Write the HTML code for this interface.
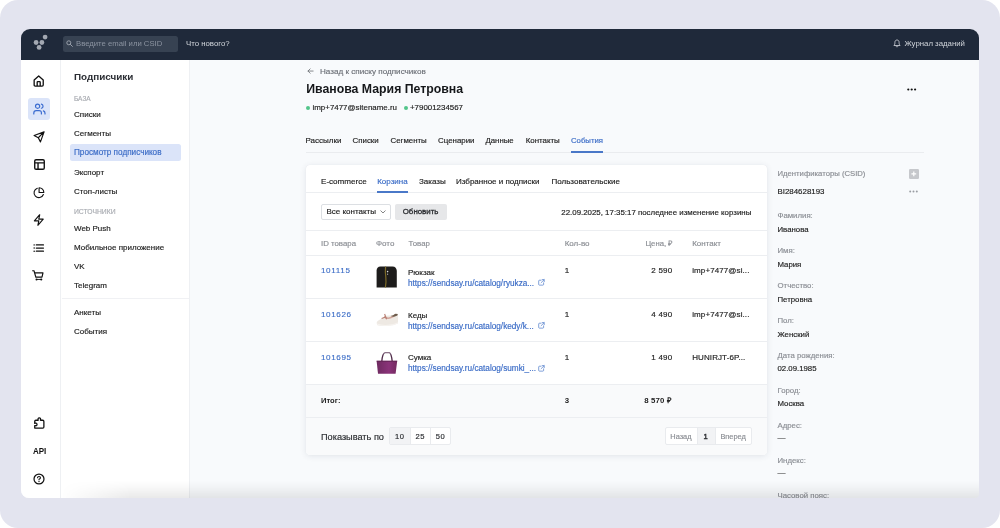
<!DOCTYPE html>
<html lang="ru">
<head>
<meta charset="utf-8">
<title>Иванова Мария Петровна</title>
<style>
*{box-sizing:border-box;margin:0;padding:0}
html,body{width:1000px;height:528px;overflow:hidden;background:#fff}
body{font-family:"Liberation Sans",sans-serif;font-size:8px;color:#222;position:relative}
.bg{position:absolute;left:0;top:0;width:1000px;height:528px;border-radius:18px;background:#e3e4ef}
.win{position:absolute;left:21px;top:29px;width:958px;height:469px;border-radius:9px 9px 4px 8px;overflow:hidden;background:#f8fafc}
.abs{position:absolute}
.layer{position:absolute;left:0;top:0;width:958px;height:469px;will-change:transform}
.t{position:absolute;white-space:nowrap;line-height:10px;font-size:8px;-webkit-text-stroke:.16px currentColor}
.hdr{position:absolute;left:0;top:0;width:958px;height:30.5px;background:#1f293a}
.rail{position:absolute;left:0;top:30.5px;width:40px;height:440px;background:#fff;border-right:1px solid #eef0f3}
.side{position:absolute;left:40px;top:30.5px;width:128.5px;height:440px;background:#fff;border-right:1px solid #eef0f3}
.g{color:#8a8d93}
.b{color:#3b6cc6}
.mono{font-family:"Liberation Mono",monospace}
.num{text-align:center;font-size:7.6px;letter-spacing:.5px;text-indent:.5px;color:#2a2c30}
.id{font-size:8.1px;letter-spacing:.62px;-webkit-text-stroke:.12px currentColor}
.card .t{margin-top:.6px}
svg{position:absolute;overflow:visible}
.ic{fill:none;stroke:#111;stroke-width:1.25;stroke-linecap:round;stroke-linejoin:round}
.card{position:absolute;left:285px;top:136px;width:460.5px;height:290px;background:#fff;border-radius:4px;box-shadow:0 1px 6px rgba(30,40,70,.10),0 0 1px rgba(30,40,70,.10)}
.hl{position:absolute;height:1px;background:#eceef1}
.fade{position:absolute;left:40px;bottom:0;width:918px;height:18px;background:linear-gradient(to bottom,rgba(0,0,0,0) 0%,rgba(0,0,0,.03) 45%,rgba(0,0,0,.085) 100%);-webkit-mask-image:linear-gradient(to right,transparent 0,#000 70px);mask-image:linear-gradient(to right,transparent 0,#000 70px)}
</style>
</head>
<body>
<div class="bg"></div>
<div class="win"><div class="layer">
  <!-- HEADER -->
  <div class="hdr"></div>
  <svg class="abs" style="left:12px;top:5px" width="16" height="18" viewBox="0 0 16 18">
    <circle cx="12.1" cy="3.1" r="2.4" fill="#a3a8b2"/>
    <circle cx="3.1" cy="8.5" r="2.4" fill="#a3a8b2"/>
    <circle cx="8.9" cy="8.5" r="2.4" fill="#a3a8b2"/>
    <circle cx="6.1" cy="13.4" r="2.4" fill="#a3a8b2"/>
  </svg>
  <div class="abs" style="left:42px;top:7px;width:115px;height:15.5px;border-radius:2.5px;background:#39444f;background:#374252"></div>
  <svg class="abs" style="left:45px;top:11px" width="7" height="7" viewBox="0 0 7 7"><circle cx="2.8" cy="2.8" r="2" fill="none" stroke="#9aa1ac" stroke-width="1"/><path d="M4.4 4.4 L6.4 6.4" stroke="#9aa1ac" stroke-width="1" stroke-linecap="round"/></svg>
  <div class="t" style="left:55px;top:9.5px;color:#8b93a0;font-size:7.72px;-webkit-text-stroke:0">Введите email или CSID</div>
  <div class="t" style="left:165px;top:9.5px;color:#d3d7dd;font-size:7.8px;-webkit-text-stroke:0">Что нового?</div>
  <svg class="abs" style="left:872px;top:10px" width="8" height="9" viewBox="0 0 8 9"><path d="M1.2 6.2 C1.9 5.4 1.9 4.6 1.9 3.4 C1.9 1.9 2.8 1 4 1 C5.2 1 6.1 1.9 6.1 3.4 C6.1 4.6 6.1 5.4 6.8 6.2 Z M3.2 7.6 C3.5 8.1 4.5 8.1 4.8 7.6" fill="none" stroke="#c6cad1" stroke-width=".9" stroke-linejoin="round" stroke-linecap="round"/></svg>
  <div class="t" style="left:883.5px;top:9.5px;color:#d0d4da;font-size:7.8px;-webkit-text-stroke:0">Журнал заданий</div>

  <!-- RAIL -->
  <div class="rail"></div>
  <div class="abs" style="left:7px;top:69px;width:21.5px;height:21.5px;border-radius:3px;background:#dbe4f9"></div>
  <!-- home -->
  <svg style="left:12.4px;top:45.6px" width="11.4" height="12.3" viewBox="0 0 12 13"><path class="ic" d="M1.2 5.2 L6 1 L10.8 5.2 V10.6 Q10.8 11.8 9.6 11.8 H2.4 Q1.2 11.8 1.2 10.6 Z M4.4 11.8 V7.6 Q4.4 7 5 7 H7 Q7.6 7 7.6 7.6 V11.8" style="stroke-width:1.4"/></svg>
  <!-- users -->
  <svg style="left:12px;top:74px" width="13" height="12" viewBox="0 0 13 12"><g class="ic" style="stroke:#3b6cd0;stroke-width:1.2"><circle cx="4.6" cy="3.2" r="2.1"/><path d="M0.8 11 V10 Q0.8 7.6 3.2 7.6 H6 Q8.4 7.6 8.4 10 V11"/><path d="M8.4 1.15 A2.1 2.1 0 0 1 8.4 5.25"/><path d="M10.4 7.9 A2.4 2.4 0 0 1 12 10.2 V11"/></g></svg>
  <!-- send -->
  <svg style="left:12px;top:102px" width="12.2" height="11.8" viewBox="0 0 13 13"><path class="ic" d="M12 1 L1 5 L5.6 7.4 L8 12 Z M12 1 L5.6 7.4" style="stroke-width:1.3"/></svg>
  <!-- layout -->
  <svg style="left:12.5px;top:130px" width="11" height="11" viewBox="0 0 12 12"><path class="ic" d="M2.2 0.8 H9.8 Q11.2 .8 11.2 2.2 V9.8 Q11.2 11.2 9.8 11.2 H2.2 Q.8 11.2 .8 9.8 V2.2 Q.8 .8 2.2 .8 Z M.8 4.2 H11.2 M4.4 4.2 V11.2" style="stroke-width:1.5"/></svg>
  <!-- pie -->
  <svg style="left:12px;top:157.6px" width="12" height="11.6" viewBox="0 0 13 13"><path class="ic" d="M11.4 8.4 A5.4 5.4 0 1 1 4.6 1.4 M6.6 .9 A5.2 5.2 0 0 1 11.9 6.2 H6.6 Z" style="stroke-width:1.25"/></svg>
  <!-- bolt -->
  <svg style="left:12.4px;top:185.3px" width="11.6" height="12" viewBox="0 0 12 13"><path class="ic" d="M7 .8 L1.2 7.4 H6 L5 12.2 L10.8 5.6 H6 Z" style="stroke-width:1.25"/></svg>
  <!-- list -->
  <svg style="left:12.3px;top:215.3px" width="11.6" height="8.1" viewBox="0 0 12 9"><path d="M3.2 1 H11.2 M3.2 4.5 H11.2 M3.2 8 H11.2" stroke="#111" stroke-width="1.35" stroke-linecap="round"/><path d="M.8 1 H.9 M.8 4.5 H.9 M.8 8 H.9" stroke="#111" stroke-width="1.6" stroke-linecap="round"/></svg>
  <!-- cart -->
  <svg style="left:11.3px;top:240.8px" width="11.8" height="10.9" viewBox="0 0 13 12"><path class="ic" d="M.7 .8 H2.2 L4.2 7.9 M3 3.1 H12.1 L11 7.9 H4.2" style="stroke-width:1.3"/><path d="M5 10.4 H10.2" stroke="#111" stroke-width="1"/><circle cx="5" cy="10.4" r="1.15" fill="#111"/><circle cx="10.2" cy="10.4" r="1.15" fill="#111"/></svg>
  <!-- puzzle -->
  <svg style="left:11.6px;top:388.2px" width="12.8" height="12.4" viewBox="0 0 13 13"><path class="ic" d="M4.2 3.4 H5.2 Q4.6 1 6.4 1 Q8.2 1 7.6 3.4 H10 Q11.2 3.4 11.2 4.6 V10.4 Q11.2 11.6 10 11.6 H1.6 V9 Q4 9.6 4 7.8 Q4 6 1.6 6.6 V4.6 Q1.6 3.4 2.8 3.4 Z" style="stroke-width:1.35"/></svg>
  <div class="t" style="left:11.9px;top:416.6px;font-weight:700;-webkit-text-stroke:0;font-size:9.3px;color:#111;transform:scaleX(.86);transform-origin:0 0">API</div>
  <!-- help -->
  <svg style="left:12px;top:444px" width="12" height="12" viewBox="0 0 13 13"><circle class="ic" cx="6.5" cy="6.5" r="5.4" style="stroke-width:1.35"/><path class="ic" d="M4.9 5.2 Q4.9 3.7 6.5 3.7 Q8.1 3.7 8.1 5.1 Q8.1 6.1 6.5 6.7 V7.4" style="stroke-width:1.15"/><circle cx="6.5" cy="9.2" r=".7" fill="#111"/></svg>

  <!-- SIDEBAR -->
  <div class="side"></div>
  <div class="t" style="left:53px;top:42px;font-size:9.9px;font-weight:700;-webkit-text-stroke:0;line-height:12px;color:#2a2d33">Подписчики</div>
  <div class="t" style="left:53px;top:64.8px;font-size:6.5px;color:#a9acb2;line-height:9px">БАЗА</div>
  <div class="t" style="left:53px;top:80.5px;font-size:8.1px">Списки</div>
  <div class="t" style="left:53px;top:99.5px;font-size:8px">Сегменты</div>
  <div class="abs" style="left:49px;top:115px;width:111px;height:17px;border-radius:2.5px;background:#dbe4f9"></div>
  <div class="t b" style="left:53px;top:119px;font-size:8.18px">Просмотр подписчиков</div>
  <div class="t" style="left:53px;top:138.5px">Экспорт</div>
  <div class="t" style="left:53px;top:157.5px">Стоп-листы</div>
  <div class="t" style="left:53px;top:177.7px;font-size:6.78px;color:#a9acb2;line-height:9px">ИСТОЧНИКИ</div>
  <div class="t" style="left:53px;top:194.5px">Web Push</div>
  <div class="t" style="left:53px;top:213.5px">Мобильное приложение</div>
  <div class="t" style="left:53px;top:232.5px">VK</div>
  <div class="t" style="left:53px;top:252px">Telegram</div>
  <div class="hl" style="left:41px;top:269px;width:127px;background:#f0f1f4"></div>
  <div class="t" style="left:53px;top:279px">Анкеты</div>
  <div class="t" style="left:53px;top:297.5px">События</div>

  <!-- MAIN HEADING -->
  <svg style="left:285.5px;top:39.3px" width="7" height="6.1" viewBox="0 0 8 7"><path d="M7 3.5 H1.2 M3.6 1 L1.1 3.5 L3.6 6" fill="none" stroke="#666a70" stroke-width=".9" stroke-linecap="round" stroke-linejoin="round"/></svg>
  <div class="t" style="left:299px;top:38.2px;font-size:8.12px;color:#6b6f76">Назад к списку подписчиков</div>
  <div class="t" style="left:285.2px;top:52.2px;font-size:12.3px;font-weight:700;-webkit-text-stroke:0;line-height:16px;color:#15171a">Иванова Мария Петровна</div>
  <div class="abs" style="left:285px;top:77px;width:4px;height:4px;border-radius:2px;background:#52c48a"></div>
  <div class="t" style="left:291.5px;top:74px;font-size:7.93px">imp+7477@sitename.ru</div>
  <div class="abs" style="left:382.6px;top:77px;width:4px;height:4px;border-radius:2px;background:#52c48a"></div>
  <div class="t" style="left:389px;top:74px;font-size:7.91px">+79001234567</div>
  <svg style="left:886px;top:58.5px" width="10" height="3" viewBox="0 0 10 3"><circle cx="1.3" cy="1.5" r="1.1" fill="#111"/><circle cx="4.7" cy="1.5" r="1.1" fill="#111"/><circle cx="8.1" cy="1.5" r="1.1" fill="#111"/></svg>

  <!-- TABS -->
  <div class="t" style="left:284.5px;top:106.5px;font-size:8.02px">Рассылки</div>
  <div class="t" style="left:331.5px;top:106.5px;font-size:7.9px">Списки</div>
  <div class="t" style="left:369.5px;top:106.5px;font-size:7.85px">Сегменты</div>
  <div class="t" style="left:417px;top:106.5px;font-size:7.9px">Сценарии</div>
  <div class="t" style="left:464.5px;top:106.5px;font-size:7.8px">Данные</div>
  <div class="t" style="left:504.7px;top:106.5px;font-size:7.9px">Контакты</div>
  <div class="t b" style="left:550px;top:106.5px;font-size:7.75px">События</div>
  <div class="hl" style="left:285px;top:123px;width:618px;background:#eaecef"></div>
  <div class="abs" style="left:550px;top:121.8px;width:32px;height:1.8px;background:#4a78c8"></div>

  <!-- CARD -->
  <div class="card">
    <div class="t" style="left:15px;top:11.3px;font-size:8.07px">E-commerce</div>
    <div class="t b" style="left:71.2px;top:11.3px;font-size:8px">Корзина</div>
    <div class="t" style="left:113px;top:11.3px;font-size:8px">Заказы</div>
    <div class="t" style="left:150px;top:11.3px;font-size:8px">Избранное и подписки</div>
    <div class="t" style="left:245.5px;top:11.3px;font-size:8px">Пользовательские</div>
    <div class="hl" style="left:0;top:27px;width:460.5px"></div>
    <div class="abs" style="left:71px;top:25.8px;width:31px;height:1.8px;background:#4a78c8"></div>

    <div class="abs" style="left:15px;top:39.2px;width:69.6px;height:15.4px;border:1px solid #dcdfe3;border-radius:2px;background:#fff"></div>
    <div class="t" style="left:20.5px;top:41.9px;font-size:8px">Все контакты</div>
    <svg style="left:73.5px;top:45.3px" width="6" height="4" viewBox="0 0 6 4"><path d="M.8 .8 L3 3 L5.2 .8" fill="none" stroke="#666" stroke-width=".8" stroke-linecap="round" stroke-linejoin="round"/></svg>
    <div class="abs" style="left:89px;top:39.2px;width:52px;height:15.4px;border-radius:2px;background:#e6e7e9"></div>
    <div class="t" style="left:88.7px;width:51.8px;text-align:center;top:41.9px;font-size:7.9px;-webkit-text-stroke:.3px #2a2c30;color:#2a2c30">Обновить</div>
    <div class="t" style="right:15.2px;top:42.4px;font-size:7.88px">22.09.2025, 17:35:17 последнее изменение корзины</div>
    <div class="hl" style="left:0;top:65px;width:460.5px"></div>

    <div class="t g" style="left:15px;top:73.7px;font-size:7.83px">ID товара</div>
    <div class="t g" style="left:70px;top:73.7px">Фото</div>
    <div class="t g" style="left:102.6px;top:73.7px;font-size:7.8px">Товар</div>
    <div class="t g" style="left:258.7px;top:73.7px">Кол-во</div>
    <div class="t g" style="right:94.3px;top:73.7px;font-size:7.7px">Цена, ₽</div>
    <div class="t g" style="left:386.2px;top:73.7px">Контакт</div>
    <div class="hl" style="left:0;top:89.5px;width:460.5px"></div>

    <!-- row 1 -->
    <div class="t b id" style="left:15px;top:100.3px">101115</div>
    <svg style="left:70px;top:101px;filter:blur(.45px)" width="22" height="22" viewBox="0 0 22 22"><path d="M0.6 21.4 V4.5 Q.6 .6 4.5 .4 H16.5 Q20.6 .6 20.8 5 V21.4 Z" fill="#1d1c1b"/><path d="M9.6 .6 Q9 6 9.8 11 Q10.4 16 9.4 21.4" fill="none" stroke="#7d6a28" stroke-width="1.2"/><circle cx="11.6" cy="5.6" r=".8" fill="#ddd"/><circle cx="11.6" cy="8.2" r=".6" fill="#bbb"/></svg>
    <div class="t" style="left:102px;top:102px">Рюкзак</div>
    <div class="t b" style="left:102px;top:113px;font-size:8.21px">https://sendsay.ru/catalog/ryukza...</div>
    <svg class="ext" style="left:231.5px;top:114px" width="7" height="7" viewBox="0 0 8 8"><path d="M3.4 1.4 H1.6 Q.8 1.4 .8 2.2 V6.2 Q.8 7 1.6 7 H5.6 Q6.4 7 6.4 6.2 V4.4 M4.8 .7 H7.1 V3 M7 .8 L3.6 4.2" fill="none" stroke="#4a78c8" stroke-width=".8" stroke-linecap="round" stroke-linejoin="round"/></svg>
    <div class="t" style="left:258.7px;top:100.3px">1</div>
    <div class="t" style="right:94.1px;top:100.3px;letter-spacing:.22px">2 590</div>
    <div class="t" style="left:386.2px;top:100.3px;letter-spacing:.1px">imp+7477@si...</div>
    <div class="hl" style="left:0;top:132.8px;width:460.5px"></div>

    <!-- row 2 -->
    <div class="t b id" style="left:15px;top:144.2px">101626</div>
    <svg style="left:69.5px;top:148px;filter:blur(.35px)" width="23" height="14" viewBox="0 0 23 14"><path d="M.7 9.6 Q1 7.8 3.6 6.8 Q7.4 5.2 9.2 2.8 L13 2.4 Q16 3.2 18.6 1 L21.6 .8 Q22.4 5 22 10.2 Q18 12.6 12 12.8 Q5 13.2 1.6 12.2 Q.5 11.4 .7 9.6 Z" fill="#eee9e3"/><path d="M.9 10.6 Q6 12.4 12 11.8 Q18 11.4 22 9.2 L22 10.4 Q18 12.8 12 13 Q5 13.3 1.6 12.3 Z" fill="#f6f3ef"/><path d="M8.2 3.6 Q11 6.4 15 4.6 Q17.6 3.6 19.6 1.6" fill="none" stroke="#d3a79c" stroke-width="1.6"/><path d="M8.6 1 L10.6 6.2 M5.6 5.6 L9.6 4" stroke="#b87f73" stroke-width="1.1"/><path d="M14.6 3 Q17.4 2.8 19.4 .8 L21.8 .9 L21.4 2.6 Q18 4.6 14.6 3 Z" fill="#6d5c4c"/></svg>
    <div class="t" style="left:102px;top:145.2px">Кеды</div>
    <div class="t b" style="left:102px;top:156.2px;font-size:8.21px">https://sendsay.ru/catalog/kedy/k...</div>
    <svg class="ext" style="left:231.5px;top:157.2px" width="7" height="7" viewBox="0 0 8 8"><path d="M3.4 1.4 H1.6 Q.8 1.4 .8 2.2 V6.2 Q.8 7 1.6 7 H5.6 Q6.4 7 6.4 6.2 V4.4 M4.8 .7 H7.1 V3 M7 .8 L3.6 4.2" fill="none" stroke="#4a78c8" stroke-width=".8" stroke-linecap="round" stroke-linejoin="round"/></svg>
    <div class="t" style="left:258.7px;top:144.2px">1</div>
    <div class="t" style="right:94.1px;top:144.2px;letter-spacing:.22px">4 490</div>
    <div class="t" style="left:386.2px;top:144.2px;letter-spacing:.1px">imp+7477@si...</div>
    <div class="hl" style="left:0;top:176px;width:460.5px"></div>

    <!-- row 3 -->
    <div class="t b id" style="left:15px;top:187.4px">101695</div>
    <svg style="left:70px;top:186px;filter:blur(.4px)" width="22" height="24" viewBox="0 0 22 24"><defs><linearGradient id="bg1" x1="0" y1="0" x2="1" y2="0"><stop offset="0" stop-color="#6e2a60"/><stop offset=".6" stop-color="#8a3379"/><stop offset="1" stop-color="#74295f"/></linearGradient><linearGradient id="hg1" x1="0" y1="0" x2="0" y2="1"><stop offset="0" stop-color="#8d7389"/><stop offset=".35" stop-color="#4e2a48"/><stop offset="1" stop-color="#4e2a48"/></linearGradient></defs><path d="M5.8 10.4 Q6.4 2.4 9 1.6 H13.4 Q15.4 2.4 16.2 10.4" fill="none" stroke="url(#hg1)" stroke-width="1.3"/><path d="M.6 9.8 H21.2 L19.6 22.8 H2 Z" fill="url(#bg1)"/><path d="M.6 9.8 H21.2 L21 11 H.8 Z" fill="#5f2453" opacity=".7"/></svg>
    <div class="t" style="left:102px;top:187.9px">Сумка</div>
    <div class="t b" style="left:102px;top:198.9px;font-size:8.21px">https://sendsay.ru/catalog/sumki_...</div>
    <svg class="ext" style="left:231.5px;top:200.4px" width="7" height="7" viewBox="0 0 8 8"><path d="M3.4 1.4 H1.6 Q.8 1.4 .8 2.2 V6.2 Q.8 7 1.6 7 H5.6 Q6.4 7 6.4 6.2 V4.4 M4.8 .7 H7.1 V3 M7 .8 L3.6 4.2" fill="none" stroke="#4a78c8" stroke-width=".8" stroke-linecap="round" stroke-linejoin="round"/></svg>
    <div class="t" style="left:258.7px;top:187.4px">1</div>
    <div class="t" style="right:94.1px;top:187.4px;letter-spacing:.22px">1 490</div>
    <div class="t" style="left:386.2px;top:187.4px;letter-spacing:.1px">HUNIRJT-6P...</div>

    <!-- total -->
    <div class="abs" style="left:0;top:219.5px;width:460.5px;height:70.5px;background:#f9fafb;border-radius:0 0 4px 4px"></div>
    <div class="hl" style="left:0;top:219px;width:460.5px"></div>
    <div class="t" style="left:15px;top:230.7px;font-weight:700;-webkit-text-stroke:0;font-size:7.6px">Итог:</div>
    <div class="t" style="left:258.7px;top:230.7px;font-weight:700;-webkit-text-stroke:0;font-size:7.8px">3</div>
    <div class="t" style="right:94.3px;top:230.7px;font-weight:700;-webkit-text-stroke:0;font-size:7.8px;letter-spacing:.2px">8 570 ₽</div>
    <div class="hl" style="left:0;top:251.5px;width:460.5px"></div>

    <!-- footer -->
    <div class="t" style="left:15px;top:265.7px;font-size:9.18px;line-height:12px;color:#2a2c30">Показывать по</div>
    <div class="abs" style="left:83px;top:262px;width:61.7px;height:17.5px;border:1px solid #e9ebee;border-radius:2px;background:#fff;overflow:hidden">
      <div class="abs" style="left:0;top:0;width:20.5px;height:16px;background:#f2f3f5"></div>
      <div class="abs" style="left:20.3px;top:0;width:1px;height:16px;background:#e9ebee"></div>
      <div class="abs" style="left:40.3px;top:0;width:1px;height:16px;background:#e9ebee"></div>
    </div>
    <div class="t num" style="left:83px;width:21px;top:266.5px">10</div>
    <div class="t num" style="left:104px;width:20px;top:266.5px">25</div>
    <div class="t num" style="left:124px;width:20.5px;top:266.5px">50</div>

    <div class="abs" style="left:359.2px;top:262px;width:86.5px;height:17.5px;border:1px solid #e9ebee;border-radius:2px;background:#fff;overflow:hidden">
      <div class="abs" style="left:30.8px;top:0;width:18px;height:16px;background:#f2f3f5"></div>
      <div class="abs" style="left:30.5px;top:0;width:1px;height:16px;background:#e9ebee"></div>
      <div class="abs" style="left:48.5px;top:0;width:1px;height:16px;background:#e9ebee"></div>
    </div>
    <div class="t" style="left:359.2px;width:31.5px;text-align:center;top:266.5px;font-size:7.4px;color:#8a8d93">Назад</div>
    <div class="t num" style="left:390.7px;width:18px;top:266.5px;-webkit-text-stroke:.4px currentColor">1</div>
    <div class="t" style="left:408.7px;width:36.8px;text-align:center;top:266.5px;font-size:7.4px;color:#8a8d93">Вперед</div>
  </div>

  <!-- RIGHT PANEL -->
  <div class="t g" style="left:756.5px;top:140.2px;font-size:7.71px">Идентификаторы (CSID)</div>
  <div class="abs" style="left:888.2px;top:140.2px;width:9.6px;height:9.6px;border-radius:1.2px;background:#c6c8cc"></div>
  <svg style="left:888.2px;top:140.2px" width="9.6" height="9.6" viewBox="0 0 9.6 9.6"><path d="M4.8 2.4 V7.2 M2.4 4.8 H7.2" stroke="#fff" stroke-width="1.2"/></svg>
  <div class="t" style="left:756.5px;top:157.9px;font-size:7.9px">BI284628193</div>
  <svg style="left:888.2px;top:160.7px" width="10" height="3" viewBox="0 0 10 3"><circle cx="1.2" cy="1.5" r="1" fill="#9a9da3"/><circle cx="4.5" cy="1.5" r="1" fill="#9a9da3"/><circle cx="7.8" cy="1.5" r="1" fill="#9a9da3"/></svg>

  <div class="t g" style="left:756.5px;top:181.5px;font-size:7.8px">Фамилия:</div>
  <div class="t" style="left:756.5px;top:195.9px;font-size:7.8px">Иванова</div>
  <div class="t g" style="left:756.5px;top:216.5px;font-size:7.8px">Имя:</div>
  <div class="t" style="left:756.5px;top:230.9px;font-size:7.8px">Мария</div>
  <div class="t g" style="left:756.5px;top:251.5px;font-size:7.8px">Отчество:</div>
  <div class="t" style="left:756.5px;top:265.9px;font-size:7.8px">Петровна</div>
  <div class="t g" style="left:756.5px;top:286.5px;font-size:7.8px">Пол:</div>
  <div class="t" style="left:756.5px;top:300.9px;font-size:7.8px">Женский</div>
  <div class="t g" style="left:756.5px;top:321.5px;font-size:7.8px">Дата рождения:</div>
  <div class="t" style="left:756.5px;top:334.7px;font-size:7.8px">02.09.1985</div>
  <div class="t g" style="left:756.5px;top:356.5px;font-size:7.8px">Город:</div>
  <div class="t" style="left:756.5px;top:369.7px;font-size:7.8px">Москва</div>
  <div class="t g" style="left:756.5px;top:391.5px;font-size:7.8px">Адрес:</div>
  <div class="t" style="left:756.5px;top:403.5px">—</div>
  <div class="t g" style="left:756.5px;top:426.5px;font-size:7.8px">Индекс:</div>
  <div class="t" style="left:756.5px;top:438.5px">—</div>
  <div class="t g" style="left:756.5px;top:461.5px;font-size:7.8px">Часовой пояс:</div>

  <div class="fade"></div>
</div></div>
</body>
</html>
